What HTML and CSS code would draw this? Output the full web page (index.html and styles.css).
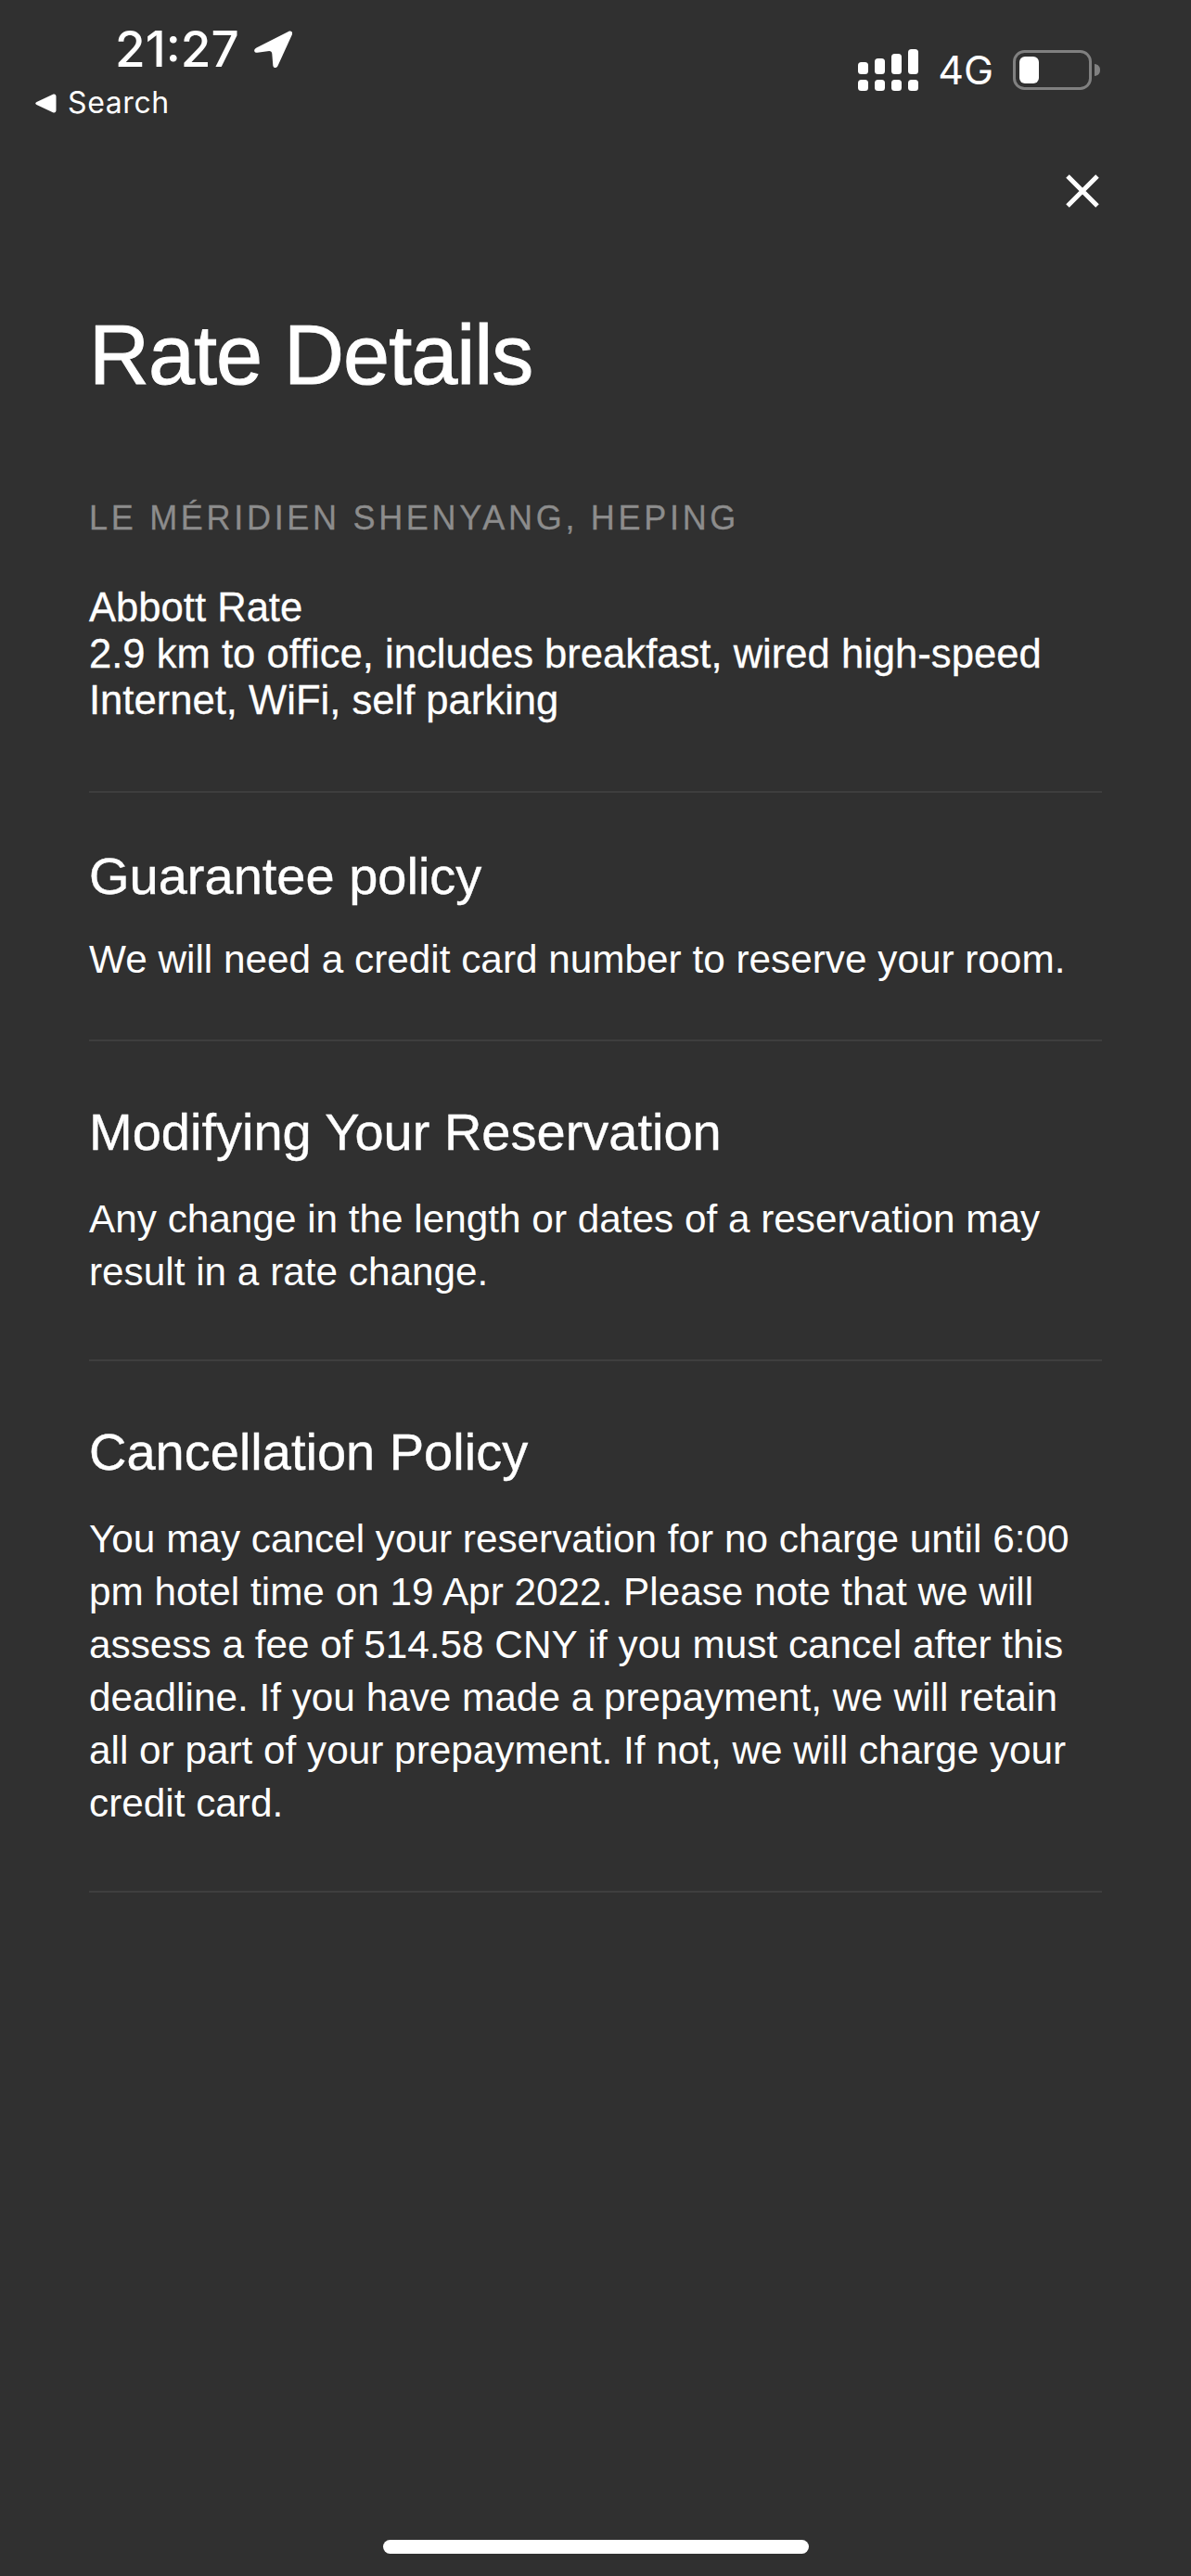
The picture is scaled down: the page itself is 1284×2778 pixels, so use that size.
FILE: index.html
```html
<!DOCTYPE html>
<html lang="en">
<head>
  <meta charset="UTF-8">
  <title>Rate Details</title>
  <link rel="stylesheet" href="styles.css">
</head>
<body>
  <div class="screen">
    <div class="statusBar">
      <div class="statusLeft">
        <div class="timeRow">
          <span class="time">21:27</span>
          <svg class="locationIcon" width="42" height="42" viewBox="0 0 42 42">
            <path d="M2.500 19.500 L37 2 C40 0.800 41.800 2.500 40.800 5.500 L25.500 39 C24 42 20.800 41.800 20.300 38.500 L19.300 26 C19.200 24 18 23 16.200 23 L3.500 24.800 C-0.500 25 -1 21.500 2.500 19.500 Z" fill="#fff"/>
          </svg>
        </div>
        <div class="backRow">
          <svg class="backIcon" width="23" height="21" viewBox="0 0 23 21">
            <path d="M1.500 9 L19 0.800 C21 0 22.500 1 22.500 3 L22.500 18 C22.500 20 21 21 19 20.200 L1.500 12 C-0.200 11 -0.200 10 1.500 9 Z" fill="#fff"/>
          </svg>
          <span class="backLabel">Search</span>
        </div>
      </div>
      <div class="statusRight">
        <svg class="signalIcon" width="65" height="45" viewBox="0 0 65 45" fill="#fff">
          <rect x="0" y="14" width="11" height="13" rx="3.500"/>
          <rect x="18" y="10" width="11" height="17" rx="3.500"/>
          <rect x="36" y="5" width="11" height="22" rx="3.500"/>
          <rect x="54" y="0" width="11" height="27" rx="3.500"/>
          <rect x="0" y="33" width="11" height="12" rx="3.500"/>
          <rect x="18" y="33" width="11" height="12" rx="3.500"/>
          <rect x="36" y="33" width="11" height="12" rx="3.500"/>
          <rect x="54" y="33" width="11" height="12" rx="3.500"/>
        </svg>
        <span class="network">4G</span>
        <svg class="batteryIcon" width="94" height="43" viewBox="0 0 94 43">
          <rect x="1.500" y="1.500" width="82" height="40" rx="11" fill="none" stroke="#808080" stroke-width="3"/>
          <rect x="7" y="7" width="21" height="29" rx="6" fill="#fff"/>
          <path d="M88 15 C92 15.500 94 18 94 21.500 C94 25 92 27.500 88 28 Z" fill="#808080"/>
        </svg>
      </div>
    </div>

    <div class="closeRow">
      <svg class="closeIcon" width="38" height="38" viewBox="0 0 38 38">
        <path d="M3 3 L35 35 M35 3 L3 35" stroke="#fff" stroke-width="5" fill="none"/>
      </svg>
    </div>

    <main class="content">
      <h1 class="pageTitle">Rate Details</h1>

      <section class="section sectionRate">
        <div class="hotelName">LE MÉRIDIEN SHENYANG, HEPING</div>
        <p class="rateText">Abbott Rate<br>2.9 km to office, includes breakfast, wired high-speed Internet, WiFi, self parking</p>
      </section>

      <section class="section sectionGuarantee">
        <h2 class="sectionTitle">Guarantee policy</h2>
        <p class="sectionText">We will need a credit card number to reserve your room.</p>
      </section>

      <section class="section">
        <h2 class="sectionTitle">Modifying Your Reservation</h2>
        <p class="sectionText">Any change in the length or dates of a reservation may result in a rate change.</p>
      </section>

      <section class="section">
        <h2 class="sectionTitle">Cancellation Policy</h2>
        <p class="sectionText">You may cancel your reservation for no charge until 6:00 pm hotel time on 19 Apr 2022. Please note that we will assess a fee of 514.58 CNY if you must cancel after this deadline. If you have made a prepayment, we will retain all or part of your prepayment. If not, we will charge your credit card.</p>
      </section>
    </main>

    <div class="homeBar"></div>
  </div>
</body>
</html>
```

FILE: styles.css
```css
html, body {
  margin: 0;
  padding: 0;
}

body {
  font-family: "Liberation Sans", Arial, sans-serif;
  background-color: #303030;
  color: #fff;
}

.screen {
  width: 1284px;
  height: 2778px;
  display: flex;
  flex-direction: column;
  overflow: hidden;
}

.statusBar {
  height: 140px;
  display: flex;
  justify-content: space-between;
  align-items: flex-start;
  padding: 0 98px 0 38px;
  box-sizing: border-box;
}

.statusLeft {
  padding-top: 25px;
}

.timeRow {
  display: flex;
  align-items: center;
  gap: 16px;
  margin-left: 86px;
  height: 56px;
}

.time {
  font-family: Inter, sans-serif;
  font-size: 53px;
  font-weight: 500;
  line-height: 56px;
}

.backRow {
  display: flex;
  align-items: center;
  gap: 12px;
  margin-top: 10px;
  height: 40px;
}

.backLabel {
  font-family: Inter, sans-serif;
  font-size: 32px;
  line-height: 40px;
  letter-spacing: 0.6px;
}

.statusRight {
  display: flex;
  align-items: center;
  padding-top: 53px;
}

.network {
  font-family: Inter, sans-serif;
  font-size: 43px;
  line-height: 45px;
  margin: 0 21px;
}

.closeRow {
  display: flex;
  justify-content: flex-end;
  padding-right: 98px;
  padding-top: 47px;
  height: 38px;
}

.content {
  padding: 0 96px;
  flex: 1;
}

.pageTitle {
  font-size: 90px;
  font-weight: 400;
  line-height: 100px;
  margin: 108px 0 0;
  letter-spacing: -1px;
  -webkit-text-stroke: 1px #fff;
}

.section {
  border-bottom: 2px solid #3e3e3e;
  padding-top: 66px;
  padding-bottom: 66px;
}

.sectionRate {
  padding-top: 0;
  padding-bottom: 0;
  height: 318px;
  box-sizing: border-box;
}

.hotelName {
  font-size: 36px;
  line-height: 44px;
  letter-spacing: 3.700px;
  color: #8c8c8c;
  margin-top: 104px;
  -webkit-text-stroke: 0.3px #8c8c8c;
}

.rateText {
  font-size: 43.600px;
  line-height: 50px;
  margin: 49px 0 0;
  -webkit-text-stroke: 0.3px #fff;
}

.sectionTitle {
  font-size: 56px;
  font-weight: 400;
  line-height: 64px;
  margin: 0;
  -webkit-text-stroke: 0.4px #fff;
}

.sectionText {
  font-size: 42.300px;
  line-height: 57px;
  margin: 33px 0 0;
}

.sectionGuarantee {
  padding-top: 58px;
  padding-bottom: 58px;
}

.sectionGuarantee .sectionText {
  margin-top: 29px;
}

.homeBar {
  width: 459px;
  height: 15px;
  border-radius: 8px;
  background: #fff;
  margin: 0 auto 24px;
}
```
